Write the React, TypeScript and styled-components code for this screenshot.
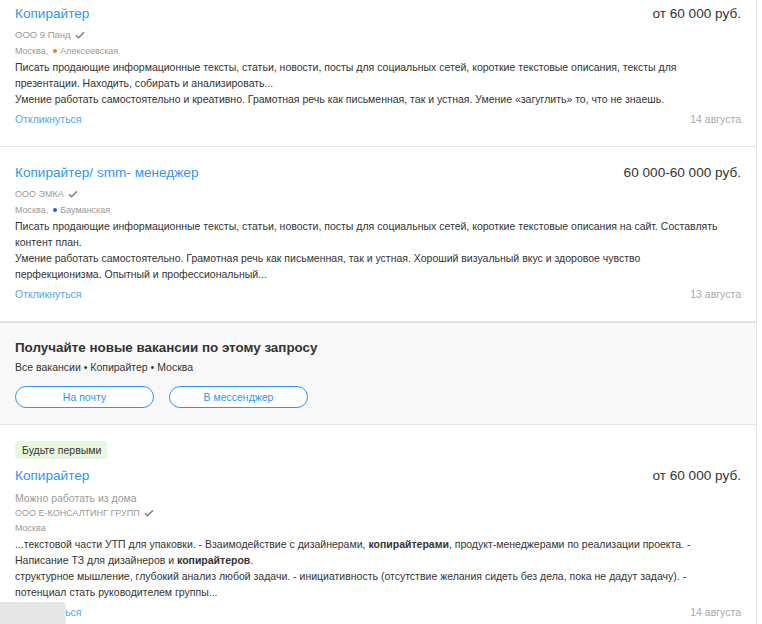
import React from 'react';
import styled, { createGlobalStyle } from 'styled-components';

const COLORS = {
  text: '#333333',
  gray: '#999999',
  link: '#2f95ee',
  linkLight: '#5ea3e2',
  line: '#e4e4e4',
  boxBg: '#f8f8f8',
  badgeBg: '#e9f7de',
};

const GlobalStyle = createGlobalStyle`
  body {
    margin: 0;
    background: #fff;
    font-family: "Liberation Sans", Arial, sans-serif;
    color: ${COLORS.text};
    overflow: hidden;
  }
`;

const Page = styled.div`
  width: 756px;
  border-right: 1px solid ${COLORS.line};
  margin-top: -12px;
  min-height: 640px;
`;

const Card = styled.div`
  padding: 17px 15px 19px;
  border-bottom: 1px solid ${COLORS.line};
`;

const TitleRow = styled.div<{ $gap?: number }>`
  display: flex;
  justify-content: space-between;
  align-items: center;
  margin-top: ${(p) => p.$gap || 0}px;
  line-height: 18px;
`;

const Title = styled.a`
  font-size: 13.6px;
  color: ${COLORS.link};
  text-decoration: none;
`;

const Salary = styled.div`
  font-size: 13.6px;
  color: ${COLORS.text};
`;

const Meta = styled.div<{ $gap?: number; $size?: number; $line?: number }>`
  font-size: ${(p) => p.$size || 9}px;
  line-height: ${(p) => p.$line || 16}px;
  color: ${COLORS.gray};
  margin-top: ${(p) => p.$gap || 0}px;
  display: flex;
  align-items: center;
  gap: 3px;
`;

const MetroDot = styled.span<{ $color: string }>`
  display: inline-block;
  width: 4px;
  height: 4px;
  border-radius: 50%;
  background: ${(p) => p.$color};
  margin-left: 2px;
`;

const Description = styled.div`
  font-size: 10.5px;
  line-height: 16px;
  color: ${COLORS.text};
  b {
    font-weight: bold;
  }
`;

const Footer = styled.div`
  display: flex;
  justify-content: space-between;
  align-items: center;
  margin-top: 4px;
  line-height: 16px;
  font-size: 10.5px;
`;

const Respond = styled.a`
  color: ${COLORS.linkLight};
  text-decoration: none;
`;

const DateText = styled.span`
  color: #a8a8a8;
`;

const Subscribe = styled.div`
  background: ${COLORS.boxBg};
  border-top: 1px solid #e0e0e0;
  border-bottom: 1px solid ${COLORS.line};
  padding: 16px 15px 16px;
`;

const SubscribeTitle = styled.div`
  font-size: 13.4px;
  font-weight: bold;
  line-height: 18px;
  color: ${COLORS.text};
`;

const SubscribeText = styled.div`
  font-size: 10.5px;
  line-height: 14px;
  margin-top: 3px;
`;

const Buttons = styled.div`
  display: flex;
  gap: 15px;
  margin-top: 12px;
`;

const OutlineButton = styled.button`
  width: 139px;
  height: 22px;
  border: 1px solid ${COLORS.link};
  border-radius: 11px;
  background: #fff;
  color: ${COLORS.link};
  font-family: inherit;
  font-size: 10.5px;
  padding: 0;
`;

const Badge = styled.div`
  display: inline-block;
  background: ${COLORS.badgeBg};
  border-radius: 3px;
  font-size: 10.5px;
  line-height: 18px;
  padding: 0 6px 0 7px;
  color: ${COLORS.text};
`;

const Card3 = styled(Card)`
  padding-top: 15px;
`;

const Corner = styled.div`
  position: fixed;
  left: 0;
  bottom: 0;
  width: 66px;
  height: 22px;
  background: #e6e6e6;
  border-top-right-radius: 4px;
`;

const Check = () => (
  <svg width="10" height="8" viewBox="0 0 10 8" style={{ marginLeft: 1 }}>
    <polyline points="1,4.2 3.6,6.8 9,1.2" fill="none" stroke="#7a7a7a" strokeWidth="1.3" />
  </svg>
);

export default function App() {
  return (
    <>
      <GlobalStyle />
      <Page>
        <Card>
          <TitleRow>
            <Title>Копирайтер</Title>
            <Salary>от 60 000 руб.</Salary>
          </TitleRow>
          <Meta $gap={4} $size={9.5}>
            ООО 9 Панд <Check />
          </Meta>
          <Meta>
            Москва, <MetroDot $color="#f07f1d" /> Алексеевская
          </Meta>
          <Description>
            Писать продающие информационные тексты, статьи, новости, посты для социальных сетей, короткие текстовые
            описания, тексты для презентации. Находить, собирать и анализировать...
          </Description>
          <Description>
            Умение работать самостоятельно и креативно. Грамотная речь как письменная, так и устная. Умение «загуглить»
            то, что не знаешь.
          </Description>
          <Footer>
            <Respond>Откликнуться</Respond>
            <DateText>14 августа</DateText>
          </Footer>
        </Card>

        <Card>
          <TitleRow>
            <Title>Копирайтер/ smm- менеджер</Title>
            <Salary>60 000-60 000 руб.</Salary>
          </TitleRow>
          <Meta $gap={4}>
            ООО ЭМКА <Check />
          </Meta>
          <Meta>
            Москва, <MetroDot $color="#0a6fc2" /> Бауманская
          </Meta>
          <Description>
            Писать продающие информационные тексты, статьи, новости, посты для социальных сетей, короткие текстовые
            описания на сайт. Составлять контент план.
          </Description>
          <Description>
            Умение работать самостоятельно. Грамотная речь как письменная, так и устная. Хороший визуальный вкус и
            здоровое чувство
            <br />
            перфекционизма. Опытный и профессиональный...
          </Description>
          <Footer>
            <Respond>Откликнуться</Respond>
            <DateText>13 августа</DateText>
          </Footer>
        </Card>

        <Subscribe>
          <SubscribeTitle>Получайте новые вакансии по этому запросу</SubscribeTitle>
          <SubscribeText>Все вакансии • Копирайтер • Москва</SubscribeText>
          <Buttons>
            <OutlineButton>На почту</OutlineButton>
            <OutlineButton>В мессенджер</OutlineButton>
          </Buttons>
        </Subscribe>

        <Card3>
          <Badge>Будьте первыми</Badge>
          <TitleRow $gap={8}>
            <Title>Копирайтер</Title>
            <Salary>от 60 000 руб.</Salary>
          </TitleRow>
          <Meta $gap={5} $size={10.5}>
            Можно работать из дома
          </Meta>
          <Meta $line={14}>
            ООО Е-КОНСАЛТИНГ ГРУПП <Check />
          </Meta>
          <Meta>Москва</Meta>
          <Description>
            ...текстовой части УТП для упаковки. - Взаимодействие с дизайнерами, <b>копирайтерами</b>,
            продукт-менеджерами по реализации проекта. - Написание ТЗ для дизайнеров и <b>копирайтеров</b>.
          </Description>
          <Description>
            структурное мышление, глубокий анализ любой задачи. - инициативность (отсутствие желания сидеть без дела,
            пока не дадут задачу). -
            <br />
            потенциал стать руководителем группы...
          </Description>
          <Footer>
            <Respond>Откликнуться</Respond>
            <DateText>14 августа</DateText>
          </Footer>
        </Card3>
      </Page>
      <Corner />
    </>
  );
}
